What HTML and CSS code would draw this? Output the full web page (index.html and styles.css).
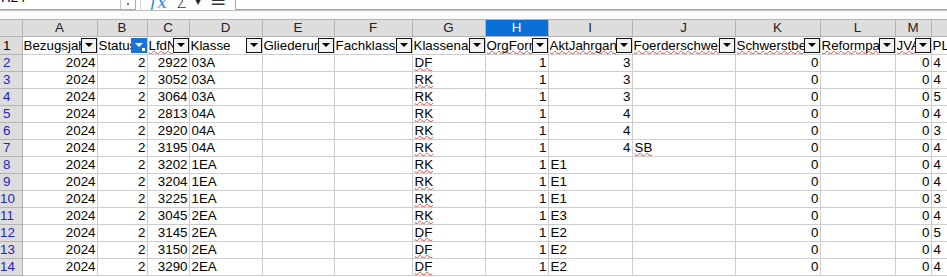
FILE: index.html
```html
<!DOCTYPE html>
<html lang="de">
<head>
  <meta charset="UTF-8" />
  <title>Klassen.ods</title>
  <link rel="stylesheet" href="styles.css">
</head>
<body>
  <div class="formula-bar">
    <div class="name-box">
      <span class="name-text">H24</span>
      <span class="name-drop"></span>
    </div>
    <div class="fx-tools">
      <span class="fx">fx</span>
      <span class="sigma">Σ</span>
      <span class="caret">▾</span>
      <span class="eq">=</span>
    </div>
    <div class="formula-input"></div>
  </div>
  <div class="sheet-gap"></div>

  <table class="sheet">
    <colgroup>
      <col style="width:22px"><col style="width:75px"><col style="width:50px"><col style="width:42px">
      <col style="width:73px"><col style="width:72px"><col style="width:78px"><col style="width:73px">
      <col style="width:63px"><col style="width:84px"><col style="width:103px"><col style="width:85px">
      <col style="width:75px"><col style="width:36px"><col style="width:60px">
    </colgroup>
    <thead>
      <tr class="col-heads">
        <th class="corner"></th>
        <th>A</th><th>B</th><th>C</th><th>D</th><th>E</th><th>F</th><th>G</th>
        <th class="sel">H</th><th>I</th><th>J</th><th>K</th><th>L</th><th>M</th><th>N</th>
      </tr>
    </thead>
    <tbody id="rows">
      <tr class="head-row">
        <th class="rn rn-plain">1</th>
        <td><div class="hc"><span class="ht">Bezugsjahr</span><span class="fbtn"></span></div></td>
        <td><div class="hc"><span class="ht">Status</span><span class="fbtn on"></span></div></td>
        <td><div class="hc"><span class="ht"><span class="sp">LfdNr</span></span><span class="fbtn"></span></div></td>
        <td><div class="hc"><span class="ht">Klasse</span><span class="fbtn"></span></div></td>
        <td><div class="hc"><span class="ht">Gliederung</span><span class="fbtn"></span></div></td>
        <td><div class="hc"><span class="ht">Fachklasse</span><span class="fbtn"></span></div></td>
        <td><div class="hc"><span class="ht">Klassenart</span><span class="fbtn"></span></div></td>
        <td><div class="hc"><span class="ht"><span class="sp">OrgForm</span></span><span class="fbtn"></span></div></td>
        <td><div class="hc"><span class="ht"><span class="sp">AktJahrgang</span></span><span class="fbtn"></span></div></td>
        <td><div class="hc"><span class="ht"><span class="sp">Foerderschwerpunkt</span></span><span class="fbtn"></span></div></td>
        <td><div class="hc"><span class="ht"><span class="sp">Schwerstbehindert</span></span><span class="fbtn"></span></div></td>
        <td><div class="hc"><span class="ht"><span class="sp">Reformpaedagogik</span></span><span class="fbtn"></span></div></td>
        <td><div class="hc"><span class="ht"><span class="sp">JVA</span></span><span class="fbtn"></span></div></td>
        <td><div class="hc"><span class="ht">PL</span></div></td>
      </tr>
    </tbody>
  </table>

  <script>
    var data = [
      [2024, 2, 2922, "03A", "DF", 1, 3, "", 0, 0, 4],
      [2024, 2, 3052, "03A", "RK", 1, 3, "", 0, 0, 4],
      [2024, 2, 3064, "03A", "RK", 1, 3, "", 0, 0, 5],
      [2024, 2, 2813, "04A", "RK", 1, 4, "", 0, 0, 4],
      [2024, 2, 2920, "04A", "RK", 1, 4, "", 0, 0, 3],
      [2024, 2, 3195, "04A", "RK", 1, 4, "SB", 0, 0, 4],
      [2024, 2, 3202, "1EA", "RK", 1, "E1", "", 0, 0, 4],
      [2024, 2, 3204, "1EA", "RK", 1, "E1", "", 0, 0, 4],
      [2024, 2, 3225, "1EA", "RK", 1, "E1", "", 0, 0, 3],
      [2024, 2, 3045, "2EA", "RK", 1, "E3", "", 0, 0, 4],
      [2024, 2, 3145, "2EA", "DF", 1, "E2", "", 0, 0, 5],
      [2024, 2, 3150, "2EA", "DF", 1, "E2", "", 0, 0, 4],
      [2024, 2, 3290, "2EA", "DF", 1, "E2", "", 0, 0, 4]
    ];

    function cell(v, spell) {
      var td = document.createElement("td");
      if (v === "") return td;
      if (typeof v === "number") td.className = "num";
      if (spell) {
        var s = document.createElement("span");
        s.className = "sp";
        s.textContent = v;
        td.appendChild(s);
      } else {
        td.textContent = v;
      }
      return td;
    }

    var tbody = document.getElementById("rows");
    data.forEach(function (r, i) {
      var tr = document.createElement("tr");
      var th = document.createElement("th");
      th.className = "rn";
      th.textContent = i + 2;
      tr.appendChild(th);
      tr.appendChild(cell(r[0]));
      tr.appendChild(cell(r[1]));
      tr.appendChild(cell(r[2]));
      tr.appendChild(cell(r[3]));
      tr.appendChild(cell(""));
      tr.appendChild(cell(""));
      tr.appendChild(cell(r[4], true));
      tr.appendChild(cell(r[5]));
      tr.appendChild(cell(r[6]));
      tr.appendChild(cell(r[7], true));
      tr.appendChild(cell(r[8]));
      tr.appendChild(cell(""));
      tr.appendChild(cell(r[9]));
      var last = cell(String(r[10]));
      last.className = "txt";
      tr.appendChild(last);
      tbody.appendChild(tr);
    });
  </script>
</body>
</html>
```

FILE: styles.css
```css
* {
  box-sizing: border-box;
}

html, body {
  margin: 0;
  padding: 0;
  width: 947px;
  height: 277px;
  overflow: hidden;
  background: #fff;
  font-family: "Liberation Sans", Arial, sans-serif;
  font-size: 13.33px;
  color: #000;
}

/* formula bar (mostly scrolled off the top) */
.formula-bar {
  display: flex;
  height: 11px;
  overflow: hidden;
  border-bottom: 1px solid #bdbdbd;
  background: #fff;
}

.name-box {
  display: flex;
  width: 136px;
  height: 10px;
  border: 1px solid #a9a9a9;
  border-top: none;
  border-left: none;
}

.name-text {
  flex: 1;
  margin-top: -10px;
  padding-left: 1px;
  line-height: 16px;
  font-size: 13.33px;
}

.name-drop {
  width: 15px;
  border-left: 1px solid #c4c4c4;
  position: relative;
}

.name-drop::after {
  content: "";
  position: absolute;
  left: 6px;
  top: 3px;
  width: 2px;
  height: 2px;
  background: #777;
}

.fx-tools {
  display: flex;
  align-items: flex-end;
  width: 95px;
  height: 10px;
  margin-left: 4px;
  border-left: 1px solid #d4d4d4;
  overflow: hidden;
}

.fx-tools span {
  display: block;
  line-height: 1;
  margin-bottom: -1px;
}

.fx {
  margin-left: 9px;
  color: #1e88e5;
  font-style: italic;
  font-family: "DejaVu Serif", serif;
  font-size: 17px;
  letter-spacing: 1px;
}

.sigma {
  margin-left: 8px;
  font-size: 17px;
  color: #333;
  font-family: "DejaVu Sans", sans-serif;
  font-weight: 300;
}

.caret {
  margin-left: 8px;
  margin-bottom: 3px !important;
  font-size: 12px;
  color: #222;
}

.eq {
  margin-left: 9px;
  font-size: 20px;
  color: #333;
  font-family: "DejaVu Sans", sans-serif;
}

.formula-input {
  flex: 1;
  height: 10px;
  border-left: 1px solid #a9a9a9;
  border-bottom: 1px solid #a9a9a9;
}

.sheet-gap {
  height: 8px;
  background: #fafafa;
}

/* the grid */
.sheet {
  table-layout: fixed;
  border-collapse: collapse;
  width: 991px;
}

.sheet td, .sheet th {
  padding: 0 1px 0 2px;
  height: 16.8px;
  line-height: 16px;
  border: 1px solid #cdcdcd;
  white-space: nowrap;
  overflow: hidden;
  font-weight: normal;
}

.col-heads th {
  height: 17px;
  background: #dddddd;
  border: 1px solid #b4b4b4;
  text-align: center;
  color: #222;
  padding: 0;
}

.col-heads th.sel {
  background: #0b6fd8;
  color: #fff;
}

.col-heads .corner {
  border-left: none;
}

.rn {
  background: #dddddd;
  border-left: none !important;
  border-color: #b4b4b4 !important;
  color: #2323c8;
  text-align: center;
  padding: 0 8px 0 0 !important;
  font-size: 13.33px;
}

.rn-plain {
  color: #000;
}

.head-row td, .head-row th {
  height: 18px;
}

.head-row td {
  padding: 0 0 0 1px;
}

.hc {
  display: flex;
  align-items: center;
  height: 17px;
}

.ht {
  flex: 1;
  min-width: 0;
  overflow: hidden;
  white-space: nowrap;
}

.fbtn {
  position: relative;
  flex: none;
  width: 16px;
  height: 15px;
  border: 1px solid #111;
  background: #f2f2f2;
}

.fbtn::before {
  content: "";
  position: absolute;
  left: 3px;
  top: 4px;
  border-left: 4px solid transparent;
  border-right: 4px solid transparent;
  border-top: 4px solid #000;
}

.fbtn.on {
  background: #1a73dd;
  border-color: #1a73dd;
}

.fbtn.on::before {
  border-top-color: #fff;
}

.fbtn.on::after {
  content: "";
  position: absolute;
  right: 1px;
  bottom: 1px;
  width: 3px;
  height: 3px;
  background: #fff;
}

.num {
  text-align: right;
}

.txt {
  text-align: left;
}

.sp {
  text-decoration: underline wavy #f2413a;
  text-decoration-thickness: 1px;
  text-underline-offset: 0px;
  text-decoration-skip-ink: none;
}
```
